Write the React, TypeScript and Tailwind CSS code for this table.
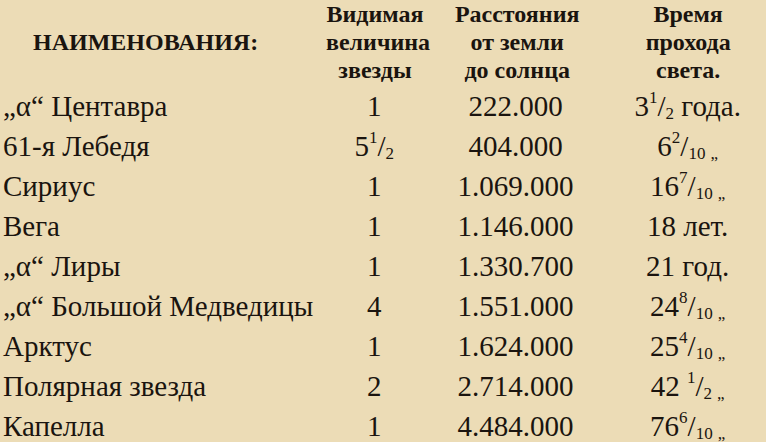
import React from 'react';

type Row = {
  name: React.ReactNode;
  mag: React.ReactNode;
  dist: string;
  time: React.ReactNode;
};

// дробь вида 3 ¹/₂
function Frac({ whole, num, den, tail, gap }: { whole: string; num: string; den: string; tail?: string; gap?: boolean }) {
  return (
    <span className="whitespace-nowrap">
      {whole}
      {gap ? ' ' : ''}
      <sup className="text-[17px] top-[-0.75em]">{num}</sup>/
      <sub className="text-[17px] bottom-[-0.2em]">
        {den}
        {tail ? <span className="ml-[5px]">{tail}</span> : null}
      </sub>
    </span>
  );
}

const ditto = '„';

const rows: Row[] = [
  { name: '„α“ Центавра', mag: '1', dist: '222.000', time: <><Frac whole="3" num="1" den="2" /> года.</> },
  { name: '61-я Лебедя', mag: <Frac whole="5" num="1" den="2" />, dist: '404.000', time: <Frac whole="6" num="2" den="10" tail={ditto} /> },
  { name: 'Сириус', mag: '1', dist: '1.069.000', time: <Frac whole="16" num="7" den="10" tail={ditto} /> },
  { name: 'Вега', mag: '1', dist: '1.146.000', time: '18 лет.' },
  { name: '„α“ Лиры', mag: '1', dist: '1.330.700', time: '21 год.' },
  { name: '„α“ Большой Медведицы', mag: '4', dist: '1.551.000', time: <Frac whole="24" num="8" den="10" tail={ditto} /> },
  { name: 'Арктус', mag: '1', dist: '1.624.000', time: <Frac whole="25" num="4" den="10" tail={ditto} /> },
  { name: 'Полярная звезда', mag: '2', dist: '2.714.000', time: <Frac whole="42" num="1" den="2" tail={ditto} gap /> },
  { name: 'Капелла', mag: '1', dist: '4.484.000', time: <Frac whole="76" num="6" den="10" tail={ditto} /> },
];

export default function App() {
  return (
    <div className="w-[766px] h-[442px] overflow-hidden bg-[#ecdcb6] text-[#1a140f] font-['Liberation_Serif',serif] [&_*]:font-['Liberation_Serif',serif]">
      {/* Шапка таблицы */}
      <div className="flex h-[86px] font-bold text-[24px] leading-[28px]">
        <div className="w-[338px] flex items-center pl-[33px] pb-[2px]">НАИМЕНОВАНИЯ:</div>
        <div className="w-[98px] text-center">
          Видимая<br />величина<br />звезды
        </div>
        <div className="w-[194px] text-center">
          Расстояния<br />от земли<br />до солнца
        </div>
        <div className="w-[162px] text-center">
          Время<br />прохода<br />света.
        </div>
      </div>

      {/* Строки */}
      {rows.map((r, i) => (
        <div key={i} className="flex h-[40px] text-[29px] leading-[40px]">
          <div className="w-[338px] pl-[3px] whitespace-nowrap">{r.name}</div>
          <div className="w-[98px] text-center">{r.mag}</div>
          <div className="w-[194px] text-center">{r.dist}</div>
          <div className="w-[162px] text-center whitespace-nowrap">{r.time}</div>
        </div>
      ))}
    </div>
  );
}
